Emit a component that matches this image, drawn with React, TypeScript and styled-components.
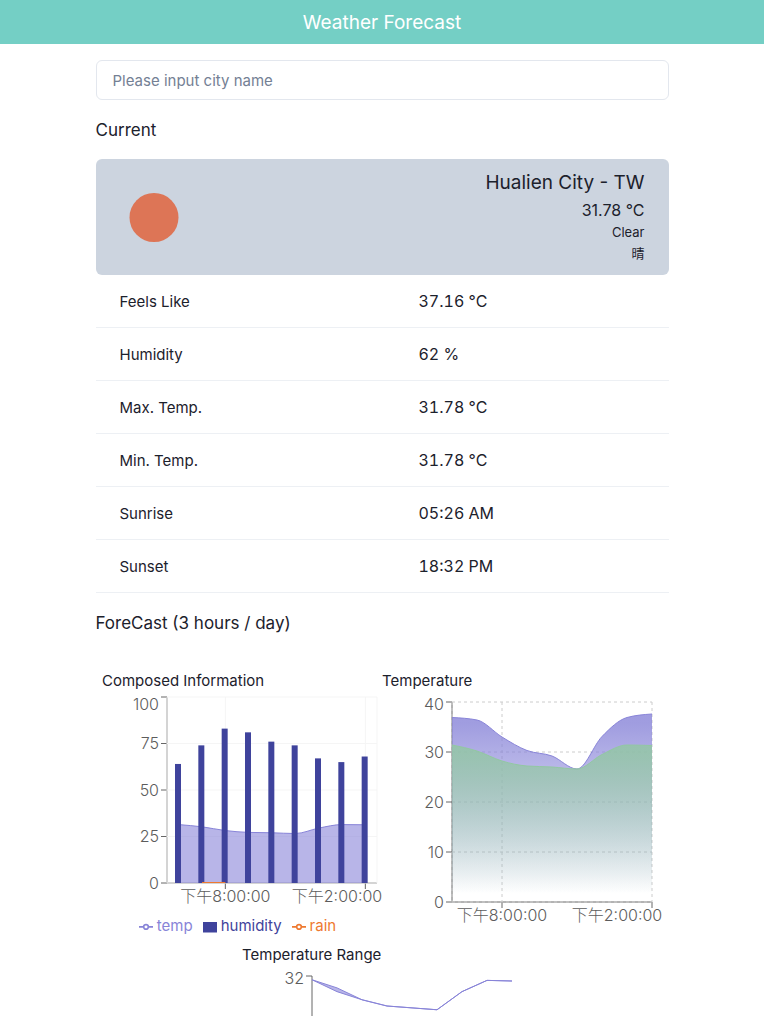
import React from "react";
import styled, { createGlobalStyle } from "styled-components";

const GlobalStyle = createGlobalStyle`
  *, *::before, *::after { box-sizing: border-box; }
  body {
    margin: 0;
    background: #ffffff;
    color: #1c212c;
    font-family: Inter, "Noto Sans CJK TC", sans-serif;
    font-size: 15px;
    line-height: 24px;
  }
  h1, h2, h3, p, ul { margin: 0; padding: 0; font-weight: 400; }
`;

const Header = styled.header`
  background: #74cfc5;
  color: #ffffff;
  padding: 8px 16px 6px;
  text-align: center;
`;

const AppTitle = styled.h1`
  font-size: 19px;
  line-height: 30px;
`;

const Content = styled.main`
  width: 75%;
  margin: 0 auto;
  padding-top: 16px;
`;

const CityInput = styled.input`
  display: block;
  width: 100%;
  height: 40px;
  padding: 0 16px;
  border: 1px solid #e3e7ee;
  border-radius: 6px;
  background: #ffffff;
  color: inherit;
  font: inherit;
  &::placeholder { color: #748094; opacity: 1; }
`;

const SectionTitle = styled.h2`
  padding: 17px 0 15px;
  font-size: 17px;
  line-height: 27px;
`;

const CurrentCard = styled.section`
  display: flex;
  align-items: center;
  justify-content: space-between;
  padding: 8px 24px 8px 8px;
  border-radius: 6px;
  background: #ccd4df;
`;

const Summary = styled.div`
  padding-bottom: 2px;
  text-align: right;
`;

const SummaryLine = styled.p<{ $size: number; $line: number }>`
  font-size: ${(p) => p.$size}px;
  line-height: ${(p) => p.$line}px;
`;

const DetailTable = styled.table`
  width: 100%;
  border-collapse: separate;
  border-spacing: 0;
  table-layout: fixed;
`;

const DetailLabel = styled.th`
  width: 52%;
  height: 53px;
  padding: 2px 24px 0;
  border-bottom: 1px solid #edf0f4;
  font-weight: 400;
  text-align: left;
`;

const DetailValue = styled.td`
  padding: 0 24px 0 25px;
  border-bottom: 1px solid #edf0f4;
  font-size: 16px;
  font-variant-numeric: tabular-nums;
`;

const ChartList = styled.div`
  display: flex;
  flex-wrap: wrap;
  justify-content: center;
  padding-top: 16px;
`;

const ChartPanel = styled.section`
  width: 280px;
`;

const ChartTitle = styled.h3`
  padding-top: 1px;
  font-size: 15px;
  line-height: 23px;
`;

const ChartBody = styled.div`
  height: 250px;
`;

const ChartSvg = styled.svg`
  display: block;
  width: 100%;
`;

const TickLabel = styled.text`
  fill: #5c5c5c;
  font-size: 16px;
  font-weight: 300;
`;

const Legend = styled.ul`
  display: flex;
  justify-content: center;
  gap: 10px;
  padding: 1px 9px 0 0;
  list-style: none;
`;

const LegendItem = styled.li<{ $color: string }>`
  display: flex;
  align-items: center;
  gap: 4px;
  color: ${(p) => p.$color};
`;

type Point = [number, number];

const details = [
  ["Feels Like", "37.16 °C"],
  ["Humidity", "62 %"],
  ["Max. Temp.", "31.78 °C"],
  ["Min. Temp.", "31.78 °C"],
  ["Sunrise", "05:26 AM"],
  ["Sunset", "18:32 PM"],
];

const humidity = [64, 74, 83, 81, 76, 74, 67, 65, 68];
const temp = [31.4, 30.2, 28.2, 27.2, 27, 26.6, 29.5, 31.4, 31.3];
const feelsLike = [36.9, 36.4, 33, 30.3, 29.2, 26.6, 33.1, 36.9, 37.6];
const tempMax = [31.4, 30.1, 28.2, 27.2, 26.9, 26.6, 29.5, 31.3, 31.2];
const tempMin = [31.4, 29.5, 28.2, 27.2, 26.9, 26.6, 29.5, 31.3, 31.2];

// Monotone cubic interpolation through points with rising x.
function monotone(points: Point[]): string {
  const n = points.length;
  const slope = points.slice(1).map((p, i) => (p[1] - points[i][1]) / (p[0] - points[i][0]));
  const tangent = points.map((_, i) => {
    if (i === 0 || i === n - 1) return 0;
    const a = slope[i - 1];
    const b = slope[i];
    if (a * b <= 0) return 0;
    return Math.sign(a) * Math.min(Math.abs(a), Math.abs(b), Math.abs(a + b) / 4) * 2;
  });
  tangent[0] = (3 * slope[0] - tangent[1]) / 2;
  tangent[n - 1] = (3 * slope[n - 2] - tangent[n - 2]) / 2;
  let d = `M${points[0][0]},${points[0][1]}`;
  for (let i = 1; i < n; i++) {
    const [x0, y0] = points[i - 1];
    const [x1, y1] = points[i];
    const h = (x1 - x0) / 3;
    d += `C${x0 + h},${y0 + h * tangent[i - 1]},${x1 - h},${y1 - h * tangent[i]},${x1},${y1}`;
  }
  return d;
}

function closeArea(line: string, points: Point[], base: number) {
  return `${line}L${points[points.length - 1][0]},${base}L${points[0][0]},${base}Z`;
}

function YTick({ x, y, label, labelY = y }: { x: number; y: number; label: string; labelY?: number }) {
  return (
    <g>
      <line x1={x - 6} x2={x} y1={y} y2={y} stroke="#666" />
      <TickLabel x={x - 8} y={labelY} dy="0.355em" textAnchor="end">{label}</TickLabel>
    </g>
  );
}

function XTick({ x, y, label, labelX = x }: { x: number; y: number; label: string; labelX?: number }) {
  return (
    <g>
      <line x1={x} x2={x} y1={y} y2={y + 6} stroke="#666" />
      <TickLabel x={labelX} y={y + 19} textAnchor="middle">{label}</TickLabel>
    </g>
  );
}

function ComposedChart() {
  const band = 210 / 9;
  const y = (v: number) => 191 - v * 1.86;
  const cx = (i: number) => 65 + band * (i + 0.5);
  const points = temp.map((v, i): Point => [cx(i), y(v)]);
  const line = monotone(points);
  return (
    <ChartSvg viewBox="0 0 280 221" height={221} role="img" aria-label="Temperature, humidity and rain">
      <line x1={65} x2={275} y1={191} y2={191} stroke="#666" />
      <line x1={65} x2={65} y1={5} y2={191} stroke="#666" />
      <XTick x={cx(2)} y={191} label="下午8:00:00" />
      <XTick x={cx(8)} y={191} label="下午2:00:00" labelX={235} />
      {[0, 25, 50, 75, 100].map((v) => (
        <YTick key={v} x={65} y={y(v)} label={String(v)} labelY={v === 100 ? 12 : y(v)} />
      ))}
      <g stroke="#f5f5f5">
        {[0, 25, 50, 75, 100].map((v) => <line key={v} x1={65} x2={275} y1={y(v)} y2={y(v)} />)}
        {[65, cx(2), cx(8), 275].map((x) => <line key={x} x1={x} x2={x} y1={5} y2={191} />)}
      </g>
      <path d={closeArea(line, points, 191)} fill="#8884d8" fillOpacity={0.6} />
      <path d={line} fill="none" stroke="#8884d8" />
      {humidity.map((v, i) => (
        <rect key={i} x={73 + band * i} y={y(v)} width={6} height={191 - y(v)} fill="#3f439c" />
      ))}
      <line x1={cx(1)} x2={cx(2)} y1={190.5} y2={190.5} stroke="#ee7930" />
    </ChartSvg>
  );
}

function LineMarker() {
  return (
    <svg width="14" height="14" viewBox="0 0 32 32" fill="none" stroke="currentColor" strokeWidth="4" aria-hidden="true">
      <path d="M0,18h10.67A5.33,5.33,0,1,1,21.33,18H32M21.33,18A5.33,5.33,0,1,1,10.67,18" />
    </svg>
  );
}

function BarMarker() {
  return (
    <svg width="14" height="14" viewBox="0 0 14 14" fill="currentColor" aria-hidden="true">
      <path d="M0,3h14v10.5H0z" />
    </svg>
  );
}

function TemperatureChart() {
  const y = (v: number) => 210 - v * 5;
  const outer = feelsLike.map((v, i): Point => [70 + 25 * i, y(v)]);
  const inner = temp.map((v, i): Point => [70 + 25 * i, y(v)]);
  const outerLine = monotone(outer);
  const innerLine = monotone(inner);
  return (
    <ChartSvg viewBox="0 0 280 250" height={250} role="img" aria-label="Temperature and feels like">
      <defs>
        <linearGradient id="feels" x1="0" y1="0" x2="0" y2="1">
          <stop offset="5%" stopColor="#8884d8" stopOpacity={0.8} />
          <stop offset="95%" stopColor="#8884d8" stopOpacity={0} />
        </linearGradient>
        <linearGradient id="actual" x1="0" y1="0" x2="0" y2="1">
          <stop offset="5%" stopColor="#92c8a2" stopOpacity={0.8} />
          <stop offset="95%" stopColor="#92c8a2" stopOpacity={0} />
        </linearGradient>
      </defs>
      <line x1={70} x2={270} y1={210} y2={210} stroke="#666" />
      <line x1={70} x2={70} y1={10} y2={210} stroke="#666" />
      <XTick x={120} y={210} label="下午8:00:00" />
      <XTick x={270} y={210} label="下午2:00:00" labelX={235} />
      {[0, 10, 20, 30, 40].map((v) => (
        <YTick key={v} x={70} y={y(v)} label={String(v)} labelY={v === 40 ? 12 : y(v)} />
      ))}
      <g stroke="#ccc" strokeDasharray="3 3">
        {[0, 10, 20, 30, 40].map((v) => <line key={v} x1={70} x2={270} y1={y(v)} y2={y(v)} />)}
        {[70, 120, 270].map((x) => <line key={x} x1={x} x2={x} y1={10} y2={210} />)}
      </g>
      <path d={closeArea(outerLine, outer, 210)} fill="url(#feels)" />
      <path d={outerLine} fill="none" stroke="#8884d8" />
      <path d={closeArea(innerLine, inner, 210)} fill="url(#actual)" />
      <path d={innerLine} fill="none" stroke="#92c8a2" />
    </ChartSvg>
  );
}

function RangeChart() {
  const y = (v: number) => 210 - v * 6.25;
  const top = tempMax.map((v, i) => `${70 + 25 * i},${y(v)}`);
  const bottom = tempMin.map((v, i) => `${70 + 25 * i},${y(v)}`);
  return (
    <ChartSvg viewBox="0 0 280 250" height={250} role="img" aria-label="Temperature range">
      <line x1={70} x2={270} y1={210} y2={210} stroke="#666" />
      <line x1={70} x2={70} y1={10} y2={210} stroke="#666" />
      <YTick x={70} y={10} label="32" labelY={12} />
      <polygon points={[...top, ...[...bottom].reverse()].join(" ")} fill="#8884d8" fillOpacity={0.6} />
      <polyline points={top.join(" ")} fill="none" stroke="#8884d8" />
      <polyline points={bottom.join(" ")} fill="none" stroke="#8884d8" />
    </ChartSvg>
  );
}

export default function App() {
  return (
    <>
      <GlobalStyle />
      <Header>
        <AppTitle>Weather Forecast</AppTitle>
      </Header>
      <Content>
        <CityInput type="text" aria-label="City name" placeholder="Please input city name" />
        <SectionTitle>Current</SectionTitle>
        <CurrentCard>
          <svg width="100" height="100" viewBox="0 0 100 100" role="img" aria-label="Clear sky">
            <circle cx="50" cy="50.5" r="24.5" fill="#dd7556" />
          </svg>
          <Summary>
            <SummaryLine $size={19} $line={30}>Hualien City - TW</SummaryLine>
            <SummaryLine $size={16} $line={24}>31.78 °C</SummaryLine>
            <SummaryLine $size={13} $line={21}>Clear</SummaryLine>
            <SummaryLine $size={13} $line={21}>晴</SummaryLine>
          </Summary>
        </CurrentCard>
        <DetailTable>
          <tbody>
            {details.map(([label, value]) => (
              <tr key={label}>
                <DetailLabel scope="row">{label}</DetailLabel>
                <DetailValue>{value}</DetailValue>
              </tr>
            ))}
          </tbody>
        </DetailTable>
        <SectionTitle>ForeCast (3 hours / day)</SectionTitle>
        <ChartList>
          <ChartPanel>
            <ChartTitle>Composed Information</ChartTitle>
            <ChartBody>
              <ComposedChart />
              <Legend>
                <LegendItem $color="#8884d8"><LineMarker />temp</LegendItem>
                <LegendItem $color="#3f439c"><BarMarker />humidity</LegendItem>
                <LegendItem $color="#ee7930"><LineMarker />rain</LegendItem>
              </Legend>
            </ChartBody>
          </ChartPanel>
          <ChartPanel>
            <ChartTitle>Temperature</ChartTitle>
            <ChartBody><TemperatureChart /></ChartBody>
          </ChartPanel>
          <ChartPanel>
            <ChartTitle>Temperature Range</ChartTitle>
            <ChartBody><RangeChart /></ChartBody>
          </ChartPanel>
        </ChartList>
      </Content>
    </>
  );
}
